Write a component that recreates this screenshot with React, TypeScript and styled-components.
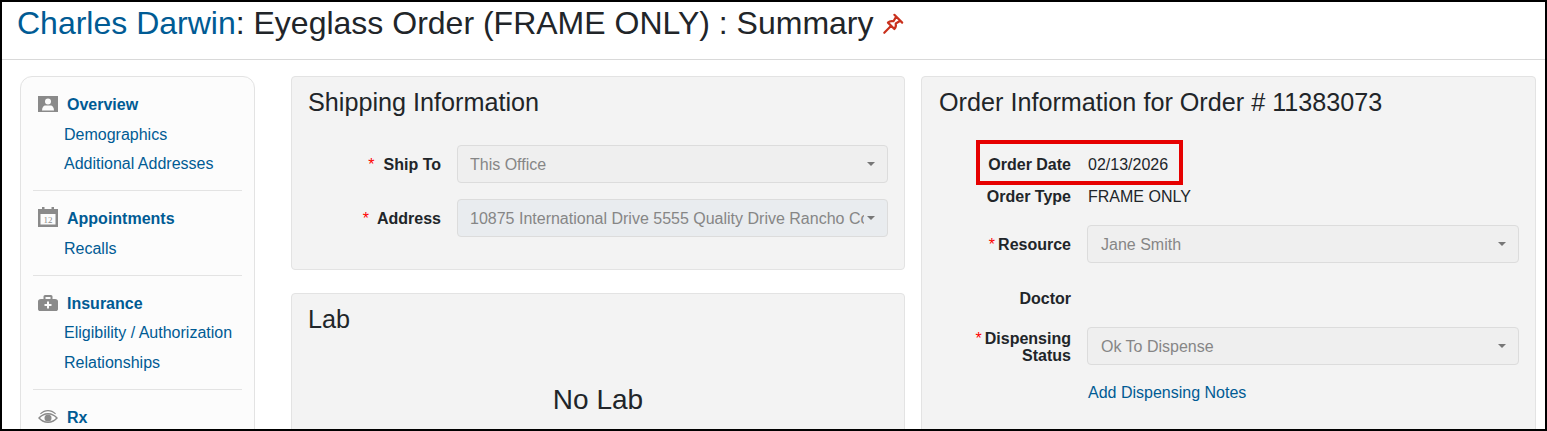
import React from "react";
import styled, { createGlobalStyle } from "styled-components";

const GlobalStyle = createGlobalStyle`
	html, body {
		margin: 0;
		padding: 0;
		background: #fff;
	}
	body {
		font-family: "Liberation Sans", Arial, sans-serif;
		font-size: 16px;
		color: #212529;
	}
	* {
		box-sizing: border-box;
	}
`;

const Frame = styled.div`
	position: relative;
	width: 1547px;
	height: 431px;
	border: 2px solid #000;
	overflow: hidden;
	background: #fff;
`;

const PageHeader = styled.header`
	height: 58px;
	padding: 3px 15px 0;
	border-bottom: 1px solid #d9d9d9;
	display: flex;
	align-items: flex-start;
`;

const Title = styled.h1`
	margin: 0;
	font-size: 32px;
	line-height: 36px;
	font-weight: 400;
	white-space: nowrap;
`;

const PatientLink = styled.a`
	color: #005b94;
`;

const PinIcon = styled.svg`
	width: 22px;
	height: 22px;
	margin: 8px 0 0 9px;
	flex: none;
`;

const Content = styled.main`
	display: flex;
	align-items: flex-start;
	padding: 16px 0 0 18px;
`;

const Sidebar = styled.nav`
	width: 235px;
	height: 400px;
	flex: none;
	background: #fcfcfc;
	border: 1px solid #e3e3e3;
	border-radius: 12px;
	padding: 16px 12px 0;
	margin-right: 36px;
`;

const NavGroup = styled.section`
	padding-bottom: 11.5px;
	margin-bottom: 16px;
	border-bottom: 1px solid #e3e3e3;
	&:last-child {
		border-bottom: 0;
	}
`;

const NavHeading = styled.div`
	display: flex;
	align-items: center;
	height: 24px;
	padding-left: 5px;
	margin-bottom: 2.5px;
`;

const NavIcon = styled.svg`
	width: 20px;
	height: 20px;
	flex: none;
	margin-right: 9px;
	fill: #8a8a8a;
	overflow: visible;
`;

const NavTitle = styled.a`
	font-size: 16px;
	font-weight: 700;
	color: #005b94;
`;

const NavLink = styled.a`
	display: block;
	height: 29.5px;
	line-height: 29.5px;
	padding-left: 31px;
	font-size: 16px;
	color: #005b94;
	white-space: nowrap;
`;

const LeftColumn = styled.div`
	width: 614px;
	flex: none;
	margin-right: 16px;
	display: flex;
	flex-direction: column;
	gap: 23px;
`;

const Panel = styled.section<{ $height: number }>`
	height: ${(p) => p.$height}px;
	background: #f3f3f3;
	border: 1px solid #e3e3e3;
	border-radius: 4px;
	padding: 9px 16px 0;
`;

const PanelTitle = styled.h2`
	margin: 0;
	font-size: 25.2px;
	line-height: 32px;
	font-weight: 400;
	white-space: nowrap;
`;

const FormRow = styled.div<{ $top: number; $height?: number }>`
	display: grid;
	grid-template-columns: 133px minmax(0, 1fr);
	column-gap: 16px;
	align-items: center;
	margin-top: ${(p) => p.$top}px;
	min-height: ${(p) => p.$height ?? 38}px;
`;

const Label = styled.label<{ $drop?: number }>`
	font-weight: 700;
	text-align: right;
	line-height: 17px;
	padding-top: ${(p) => p.$drop ?? 0}px;
`;

const Required = styled.span<{ $gap: number }>`
	color: #f00;
	font-weight: 400;
	margin-right: ${(p) => p.$gap}px;
`;

const Select = styled.div<{ $tint?: boolean }>`
	position: relative;
	height: 38px;
	line-height: 38px;
	background: ${(p) => (p.$tint ? "#e9ecef" : "#efefef")};
	border: 1px solid #dcdcdc;
	border-radius: 4px;
	padding: 0 23px 0 12px;
	color: #868686;
	&::after {
		content: "";
		position: absolute;
		right: 12px;
		top: 16px;
		border-top: 4px solid #777;
		border-left: 4px solid transparent;
		border-right: 4px solid transparent;
	}
`;

const SelectText = styled.div`
	white-space: nowrap;
	overflow: hidden;
	height: 36px;
`;

const Value = styled.span`
	white-space: nowrap;
	line-height: 17px;
`;

const NotesLink = styled.a`
	color: #005b94;
	white-space: nowrap;
`;

const RightColumn = styled.div`
	width: 615px;
	flex: none;
	${PanelTitle}, ${Value}, ${NotesLink}, ${SelectText} {
		padding-left: 1px;
	}
`;

const Highlight = styled.div`
	position: absolute;
	left: 974px;
	top: 138px;
	width: 207px;
	height: 45px;
	border: 4px solid #e60000;
	pointer-events: none;
`;

const NoLab = styled.div`
	text-align: center;
	font-size: 28px;
	line-height: 36px;
	margin-top: 47px;
`;

const App: React.FC = () => {
	return (
		<>
			<GlobalStyle />
			<Frame>
				<PageHeader>
					<Title>
						<PatientLink>Charles Darwin</PatientLink>: Eyeglass Order (FRAME ONLY) : Summary
					</Title>
					<PinIcon viewBox="0 0 24 24" fill="none" stroke="#c9301c" strokeWidth="2.4" strokeLinejoin="round" strokeLinecap="round">
						<path d="M13.500 2l8.500 8.500M15.500 4l-3 5c-2.500-.5-4.500 0-6 1.500l7 7c1.500-1.500 2-3.500 1.500-6l5-3M10 14l-7.500 7.500" />
					</PinIcon>
				</PageHeader>
				<Content>
					<Sidebar>
						<NavGroup>
							<NavHeading>
								<NavIcon viewBox="0 0 20 20">
									<path fillRule="evenodd" d="M0 1h20v16H0zM10 3.500a3 3 0 1 0 0 6 3 3 0 0 0 0-6zM4 15.500h12c0-3.500-2-5-3-5H7c-1 0-3 1.500-3 5z" />
								</NavIcon>
								<NavTitle>Overview</NavTitle>
							</NavHeading>
							<NavLink>Demographics</NavLink>
							<NavLink>Additional Addresses</NavLink>
						</NavGroup>
						<NavGroup>
							<NavHeading>
								<NavIcon viewBox="0 0 20 20">
									<path fillRule="evenodd" d="M4-2h2.500v2h7v-2H16v2h4v18H0V0h4zM2.500 5v10.500h15V5z" />
									<text x="10" y="13.500" fontSize="9" textAnchor="middle" fontFamily="Liberation Serif">12</text>
								</NavIcon>
								<NavTitle>Appointments</NavTitle>
							</NavHeading>
							<NavLink>Recalls</NavLink>
						</NavGroup>
						<NavGroup>
							<NavHeading>
								<NavIcon viewBox="0 0 20 20">
									<path fillRule="evenodd" d="M5.500 5V2.500C5.500 1.500 6.500 1 7.500 1h5c1 0 2 .5 2 1.500V5H17c2 0 3 1 3 2.500V15c0 1.500-1 2-2 2H2c-1 0-2-.5-2-2V7.500C0 6 1 5 3 5zM7.500 5h5V3h-5zM9 7.500V10H6.500v2H9v2.500h2V12h2.500v-2H11V7.500z" />
								</NavIcon>
								<NavTitle>Insurance</NavTitle>
							</NavHeading>
							<NavLink>Eligibility / Authorization</NavLink>
							<NavLink>Relationships</NavLink>
						</NavGroup>
						<NavGroup>
							<NavHeading>
								<NavIcon viewBox="0 0 20 20">
									<path fillRule="evenodd" d="M0 10c2.500-3 6-5 10-5s7.500 2 10 5c-2.500 3-6 5-10 5S2.500 13 0 10zM10 6.500c-3 0-6 1.500-8 3.500 2 2 5 3.500 8 3.500s6-1.500 8-3.500c-2-2-5-3.500-8-3.500z" />
									<circle cx="10" cy="10" r="3.500" />
									<path d="M2 5.500C4.500 3 7 2 10 2s5.500 1 8 3.500l-.8.800C15 4.300 12.500 3.200 10 3.200S5 4.300 2.800 6.300z" />
								</NavIcon>
								<NavTitle>Rx</NavTitle>
							</NavHeading>
						</NavGroup>
					</Sidebar>
					<LeftColumn>
						<Panel $height={194}>
							<PanelTitle>Shipping Information</PanelTitle>
							<FormRow $top={27}>
								<Label><Required $gap={9}>*</Required>Ship To</Label>
								<Select><SelectText>This Office</SelectText></Select>
							</FormRow>
							<FormRow $top={16}>
								<Label><Required $gap={8}>*</Required>Address</Label>
								<Select $tint><SelectText>10875 International Drive 5555 Quality Drive Rancho Cordova</SelectText></Select>
							</FormRow>
						</Panel>
						<Panel $height={200}>
							<PanelTitle>Lab</PanelTitle>
							<NoLab>No Lab</NoLab>
						</Panel>
					</LeftColumn>
					<RightColumn>
						<Panel $height={400}>
							<PanelTitle>Order Information for Order # 11383073</PanelTitle>
							<FormRow $top={34} $height={24}>
								<Label>Order Date</Label>
								<Value>02/13/2026</Value>
							</FormRow>
							<FormRow $top={8} $height={24}>
								<Label>Order Type</Label>
								<Value>FRAME ONLY</Value>
							</FormRow>
							<FormRow $top={17}>
								<Label><Required $gap={3}>*</Required>Resource</Label>
								<Select><SelectText>Jane Smith</SelectText></Select>
							</FormRow>
							<FormRow $top={23} $height={24}>
								<Label>Doctor</Label>
								<span />
							</FormRow>
							<FormRow $top={17}>
								<Label $drop={2}><Required $gap={3}>*</Required>Dispensing Status</Label>
								<Select><SelectText>Ok To Dispense</SelectText></Select>
							</FormRow>
							<FormRow $top={16} $height={24}>
								<span />
								<NotesLink>Add Dispensing Notes</NotesLink>
							</FormRow>
						</Panel>
					</RightColumn>
				</Content>
				<Highlight />
			</Frame>
		</>
	);
};

export default App;
